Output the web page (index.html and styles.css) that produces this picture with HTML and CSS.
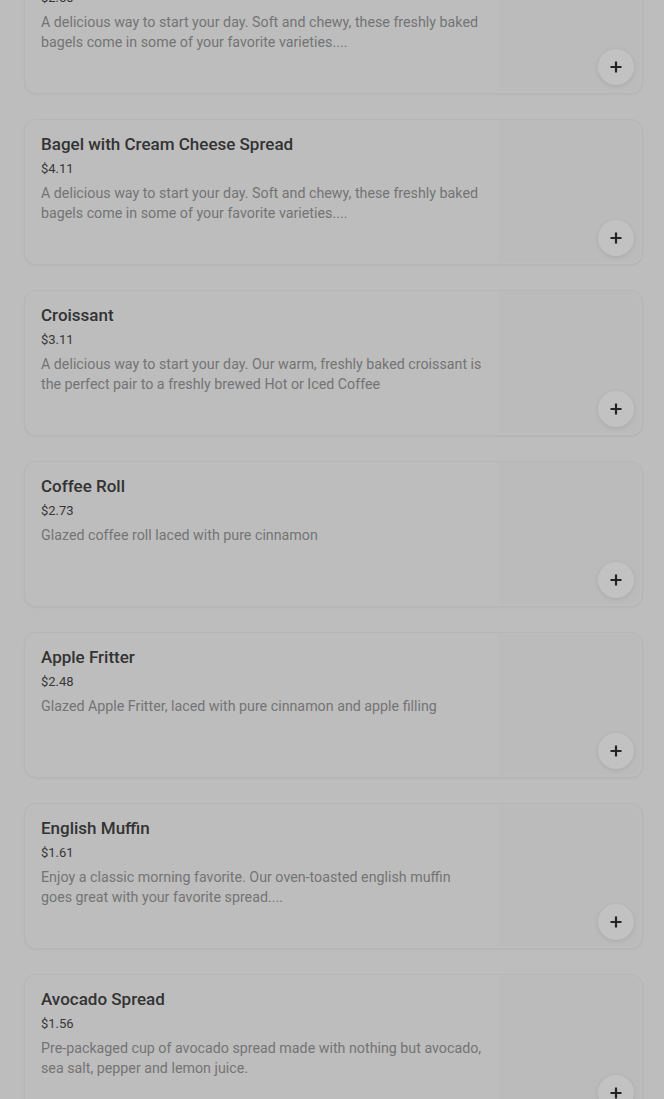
FILE: index.html
```html
<!DOCTYPE html>
<html lang="en">
<head>
<meta charset="utf-8">
<title>Menu</title>
<link rel="stylesheet" href="styles.css">
</head>
<body>
<main class="list">
  <article class="card">
    <div class="info">
      <h3 class="title">Plain Bagel</h3>
      <div class="price">$2.50</div>
      <p class="desc">A delicious way to start your day. Soft and chewy, these freshly baked bagels come in some of your favorite varieties....</p>
    </div>
    <div class="media"><button class="add" aria-label="Add"><svg viewBox="0 0 14 14" width="14" height="14"><path d="M7 1.5v11M1.5 7h11" stroke="#232323" stroke-width="2.2"/></svg></button></div>
  </article>
  <article class="card">
    <div class="info">
      <h3 class="title">Bagel with Cream Cheese Spread</h3>
      <div class="price">$4.11</div>
      <p class="desc">A delicious way to start your day. Soft and chewy, these freshly baked bagels come in some of your favorite varieties....</p>
    </div>
    <div class="media"><button class="add" aria-label="Add"><svg viewBox="0 0 14 14" width="14" height="14"><path d="M7 1.5v11M1.5 7h11" stroke="#232323" stroke-width="2.2"/></svg></button></div>
  </article>
  <article class="card">
    <div class="info">
      <h3 class="title">Croissant</h3>
      <div class="price">$3.11</div>
      <p class="desc">A delicious way to start your day. Our warm, freshly baked croissant is the perfect pair to a freshly brewed Hot or Iced Coffee</p>
    </div>
    <div class="media"><button class="add" aria-label="Add"><svg viewBox="0 0 14 14" width="14" height="14"><path d="M7 1.5v11M1.5 7h11" stroke="#232323" stroke-width="2.2"/></svg></button></div>
  </article>
  <article class="card">
    <div class="info">
      <h3 class="title">Coffee Roll</h3>
      <div class="price">$2.73</div>
      <p class="desc">Glazed coffee roll laced with pure cinnamon</p>
    </div>
    <div class="media"><button class="add" aria-label="Add"><svg viewBox="0 0 14 14" width="14" height="14"><path d="M7 1.5v11M1.5 7h11" stroke="#232323" stroke-width="2.2"/></svg></button></div>
  </article>
  <article class="card">
    <div class="info">
      <h3 class="title">Apple Fritter</h3>
      <div class="price">$2.48</div>
      <p class="desc">Glazed Apple Fritter, laced with pure cinnamon and apple filling</p>
    </div>
    <div class="media"><button class="add" aria-label="Add"><svg viewBox="0 0 14 14" width="14" height="14"><path d="M7 1.5v11M1.5 7h11" stroke="#232323" stroke-width="2.2"/></svg></button></div>
  </article>
  <article class="card">
    <div class="info">
      <h3 class="title">English Muffin</h3>
      <div class="price">$1.61</div>
      <p class="desc">Enjoy a classic morning favorite. Our oven-toasted english muffin goes great with your favorite spread....</p>
    </div>
    <div class="media"><button class="add" aria-label="Add"><svg viewBox="0 0 14 14" width="14" height="14"><path d="M7 1.5v11M1.5 7h11" stroke="#232323" stroke-width="2.2"/></svg></button></div>
  </article>
  <article class="card">
    <div class="info">
      <h3 class="title">Avocado Spread</h3>
      <div class="price">$1.56</div>
      <p class="desc">Pre-packaged cup of avocado spread made with nothing but avocado, sea salt, pepper and lemon juice.</p>
    </div>
    <div class="media"><button class="add" aria-label="Add"><svg viewBox="0 0 14 14" width="14" height="14"><path d="M7 1.5v11M1.5 7h11" stroke="#232323" stroke-width="2.2"/></svg></button></div>
  </article>
</main>
</body>
</html>
```

FILE: styles.css
```css
html, body {
  margin: 0;
  padding: 0;
  background: #bdbdbd;
  font-family: Roboto, "Liberation Sans", Arial, sans-serif;
}

.list {
  display: flex;
  flex-direction: column;
  gap: 25px;
  padding: 0 21px 0 24px;
  margin-top: -52px;
}

.card {
  display: flex;
  height: 146px;
  box-sizing: border-box;
  border: 1px solid #b6b6b6;
  border-radius: 12px;
  background: #bdbdbd;
  box-shadow: 0 1px 2px rgba(0, 0, 0, 0.04);
  overflow: hidden;
}

.info {
  flex: 1;
  min-width: 0;
  padding: 12px 16px 0 16px;
}

.title {
  margin: 0 0 3px;
  font-size: 17px;
  line-height: 24px;
  font-weight: 500;
  color: #333333;
}

.price {
  font-size: 13px;
  line-height: 20px;
  color: #383838;
  margin-bottom: 4px;
}

.desc {
  margin: 0;
  font-size: 14.25px;
  line-height: 20px;
  color: #747474;
}

.media {
  position: relative;
  width: 142px;
  flex: none;
  background: #bbbbbb;
  margin: 0 2px 2px 0;
  border-radius: 0 10px 10px 0;
}

.add {
  position: absolute;
  right: 6px;
  bottom: 6px;
  width: 36px;
  height: 36px;
  border: none;
  border-radius: 50%;
  background: #c2c2c2;
  box-shadow: 0 1px 4px rgba(0, 0, 0, 0.1);
  display: flex;
  align-items: center;
  justify-content: center;
  padding: 0;
}
```
